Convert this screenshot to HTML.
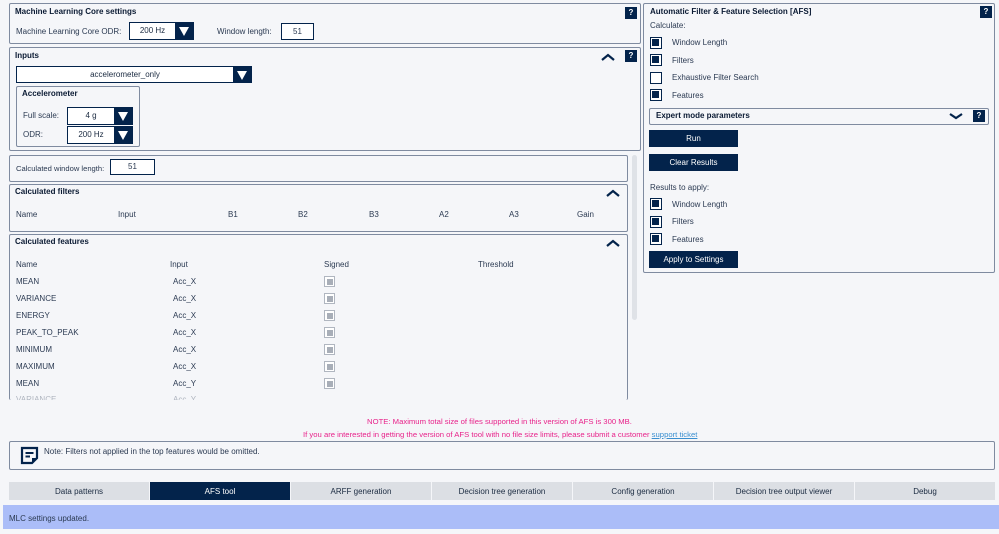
<!DOCTYPE html>
<html><head><meta charset="utf-8"><style>
*{box-sizing:border-box;margin:0;padding:0}
body{width:999px;height:534px;background:#f5f6f9;font-family:"Liberation Sans",Arial,sans-serif;font-size:8px;color:#2b3a52;position:relative;overflow:hidden}
.a{position:absolute}
.p{position:absolute;border:1.5px solid #7f8ba0;border-radius:2px;background:#f5f6f9}
.t{position:absolute;font-weight:bold;color:#0a1a33;font-size:8px}
.q{position:absolute;width:12px;height:12px;background:#03234b;color:#fff;font-size:8px;font-weight:bold;text-align:center;line-height:12px}
.sel{position:absolute;border:1px solid #03234b;background:#fff;text-align:center;font-size:8px;color:#1a2a40}
.sel .ar{position:absolute;right:0;top:0;bottom:0;width:18px;background:#03234b}
.sel .ar:after{content:"";position:absolute;left:4px;top:4px;border-left:5px solid transparent;border-right:5px solid transparent;border-top:9px solid #fff}
.inp{position:absolute;border:1px solid #03234b;background:#fff;text-align:center;font-size:8px}
.cb{position:absolute;width:12px;height:12px;border:1.5px solid #03234b;background:#fff}
.cb.on:after{content:"";position:absolute;left:1px;top:1px;width:7px;height:7px;background:#03234b}
.sg{position:absolute;width:11px;height:11px;border:1px solid #b0b6c0;background:#fff}
.sg:after{content:"";position:absolute;left:1.5px;top:1.5px;width:6px;height:6px;background:#a8aeb8}
.btn{position:absolute;background:#03234b;color:#fff;text-align:center;font-size:8px}
.chev{position:absolute;width:14px;height:8px}
.tab{position:absolute;top:482px;height:18px;background:#dcdfe4;text-align:center;line-height:19px;font-size:8px;color:#1a2a40}
</style></head><body>

<div class="p" style="left:9px;top:3px;width:632px;height:41px"></div>
<div class="t" style="left:15px;top:7px">Machine Learning Core settings</div>
<div class="q" style="left:625px;top:7px">?</div>
<div class="a" style="left:16px;top:27px">Machine Learning Core ODR:</div>
<div class="sel" style="left:129px;top:22px;width:65px;height:18px;line-height:16px;padding-right:18px">200 Hz<div class="ar"></div></div>
<div class="a" style="left:217px;top:27px">Window length:</div>
<div class="inp" style="left:281px;top:23px;width:33px;height:17px;line-height:15px">51</div>

<div class="p" style="left:9px;top:47px;width:632px;height:104px"></div>
<div class="t" style="left:15px;top:51px">Inputs</div>
<svg class="chev" style="left:601px;top:53px" viewBox="0 0 14 8"><path d="M1 7L7 2L13 7" stroke="#03234b" stroke-width="2.2" fill="none"/></svg>
<div class="q" style="left:625px;top:50px">?</div>
<div class="sel" style="left:16px;top:66px;width:236px;height:17px;line-height:15px;padding-right:18px">accelerometer_only<div class="ar"></div></div>
<div class="p" style="left:16px;top:86px;width:124px;height:61px;border-width:1px"></div>
<div class="t" style="left:22px;top:89px">Accelerometer</div>
<div class="a" style="left:23px;top:111px">Full scale:</div>
<div class="sel" style="left:67px;top:107px;width:66px;height:18px;line-height:16px;padding-right:18px">4 g<div class="ar"></div></div>
<div class="a" style="left:23px;top:130px">ODR:</div>
<div class="sel" style="left:67px;top:126px;width:66px;height:18px;line-height:16px;padding-right:18px">200 Hz<div class="ar"></div></div>

<div class="a" style="left:632px;top:155px;width:5px;height:165px;background:#dfe2e7;border-radius:3px"></div>

<div class="p" style="left:9px;top:155px;width:619px;height:27px;border-width:1px"></div>
<div class="a" style="left:16px;top:164px;font-size:7.6px">Calculated window length:</div>
<div class="inp" style="left:110px;top:159px;width:45px;height:16px;line-height:14px">51</div>

<div class="p" style="left:9px;top:184px;width:619px;height:48px;border-width:1px"></div>
<div class="t" style="left:15px;top:187px">Calculated filters</div>
<svg class="chev" style="left:606px;top:189px" viewBox="0 0 14 8"><path d="M1 7L7 2L13 7" stroke="#03234b" stroke-width="2.2" fill="none"/></svg>
<div class="a" style="left:16px;top:210px">Name</div><div class="a" style="left:118px;top:210px">Input</div>
<div class="a" style="left:228px;top:210px">B1</div><div class="a" style="left:298px;top:210px">B2</div>
<div class="a" style="left:369px;top:210px">B3</div><div class="a" style="left:439px;top:210px">A2</div>
<div class="a" style="left:509px;top:210px">A3</div><div class="a" style="left:577px;top:210px">Gain</div>

<div class="a" style="left:9px;top:234px;width:619px;height:166px;border:1px solid #7f8ba0;border-bottom:none;border-radius:2px"></div>
<div class="t" style="left:15px;top:237px">Calculated features</div>
<svg class="chev" style="left:606px;top:239px" viewBox="0 0 14 8"><path d="M1 7L7 2L13 7" stroke="#03234b" stroke-width="2.2" fill="none"/></svg>
<div class="a" style="left:16px;top:260px">Name</div><div class="a" style="left:170px;top:260px">Input</div>
<div class="a" style="left:324px;top:260px">Signed</div><div class="a" style="left:478px;top:260px">Threshold</div>

<div class="a" style="left:16px;top:277px">MEAN</div><div class="a" style="left:173px;top:277px">Acc_X</div><div class="sg" style="left:324px;top:276px"></div>
<div class="a" style="left:16px;top:294px">VARIANCE</div><div class="a" style="left:173px;top:294px">Acc_X</div><div class="sg" style="left:324px;top:293px"></div>
<div class="a" style="left:16px;top:311px">ENERGY</div><div class="a" style="left:173px;top:311px">Acc_X</div><div class="sg" style="left:324px;top:310px"></div>
<div class="a" style="left:16px;top:328px">PEAK_TO_PEAK</div><div class="a" style="left:173px;top:328px">Acc_X</div><div class="sg" style="left:324px;top:327px"></div>
<div class="a" style="left:16px;top:345px">MINIMUM</div><div class="a" style="left:173px;top:345px">Acc_X</div><div class="sg" style="left:324px;top:344px"></div>
<div class="a" style="left:16px;top:362px">MAXIMUM</div><div class="a" style="left:173px;top:362px">Acc_X</div><div class="sg" style="left:324px;top:361px"></div>
<div class="a" style="left:16px;top:379px">MEAN</div><div class="a" style="left:173px;top:379px">Acc_Y</div><div class="sg" style="left:324px;top:378px"></div>
<div class="a" style="left:10px;top:395px;width:617px;height:5px;overflow:hidden;opacity:.35"><div class="a" style="left:6px;top:0">VARIANCE</div><div class="a" style="left:163px;top:0">Acc_Y</div></div>

<div class="p" style="left:643px;top:3px;width:352px;height:270px"></div>
<div class="t" style="left:650px;top:7px">Automatic Filter &amp; Feature Selection [AFS]</div>
<div class="q" style="left:980px;top:6px">?</div>
<div class="a" style="left:650px;top:21px">Calculate:</div>
<div class="cb on" style="left:650px;top:37px"></div><div class="a" style="left:672px;top:38px">Window Length</div>
<div class="cb on" style="left:650px;top:54px"></div><div class="a" style="left:672px;top:56px">Filters</div>
<div class="cb" style="left:650px;top:72px"></div><div class="a" style="left:672px;top:73px">Exhaustive Filter Search</div>
<div class="cb on" style="left:650px;top:89px"></div><div class="a" style="left:672px;top:91px">Features</div>
<div class="p" style="left:649px;top:108px;width:340px;height:17px;border-width:1px"></div>
<div class="t" style="left:656px;top:111px">Expert mode parameters</div>
<svg class="chev" style="left:949px;top:112px" viewBox="0 0 14 8"><path d="M1 2L7 6L13 2" stroke="#03234b" stroke-width="2.2" fill="none"/></svg>
<div class="q" style="left:973px;top:110px">?</div>
<div class="btn" style="left:649px;top:130px;width:89px;height:17px;line-height:17px">Run</div>
<div class="btn" style="left:649px;top:154px;width:89px;height:17px;line-height:17px">Clear Results</div>
<div class="a" style="left:650px;top:183px">Results to apply:</div>
<div class="cb on" style="left:650px;top:198px"></div><div class="a" style="left:672px;top:200px">Window Length</div>
<div class="cb on" style="left:650px;top:216px"></div><div class="a" style="left:672px;top:217px">Filters</div>
<div class="cb on" style="left:650px;top:233px"></div><div class="a" style="left:672px;top:235px">Features</div>
<div class="btn" style="left:649px;top:251px;width:89px;height:17px;line-height:17px">Apply to Settings</div>

<div class="a" style="left:0;top:417px;width:999px;text-align:center;color:#e8228a;font-size:7.7px">NOTE: Maximum total size of files supported in this version of AFS is 300 MB.</div>
<div class="a" style="left:303px;top:430px;color:#e8228a;white-space:nowrap;font-size:7.7px">If you are interested in getting the version of AFS tool with no file size limits, please submit a customer <span style="color:#3a8fd0;text-decoration:underline">support ticket</span></div>

<div class="p" style="left:9px;top:441px;width:986px;height:29px"></div>
<svg class="a" style="left:20px;top:446px" width="19" height="19" viewBox="0 0 19 19"><path d="M2 2H17V12L12 17H2Z" fill="none" stroke="#03234b" stroke-width="2.2"/><path d="M5.5 7H13.5M5.5 10.5H10" stroke="#03234b" stroke-width="2"/><path d="M12 17V12H17Z" fill="#03234b"/></svg>
<div class="a" style="left:44px;top:447px">Note: Filters not applied in the top features would be omitted.</div>

<div class="tab" style="left:9px;width:140px">Data patterns</div>
<div class="tab" style="left:150px;width:140px;background:#03234b;color:#fff">AFS tool</div>
<div class="tab" style="left:291px;width:140px">ARFF generation</div>
<div class="tab" style="left:432px;width:140px">Decision tree generation</div>
<div class="tab" style="left:573px;width:140px">Config generation</div>
<div class="tab" style="left:714px;width:140px">Decision tree output viewer</div>
<div class="tab" style="left:855px;width:140px">Debug</div>

<div class="a" style="left:3px;top:505px;width:996px;height:24px;background:#abbdf8"></div>
<div class="a" style="left:9px;top:514px">MLC settings updated.</div>
</body></html>
